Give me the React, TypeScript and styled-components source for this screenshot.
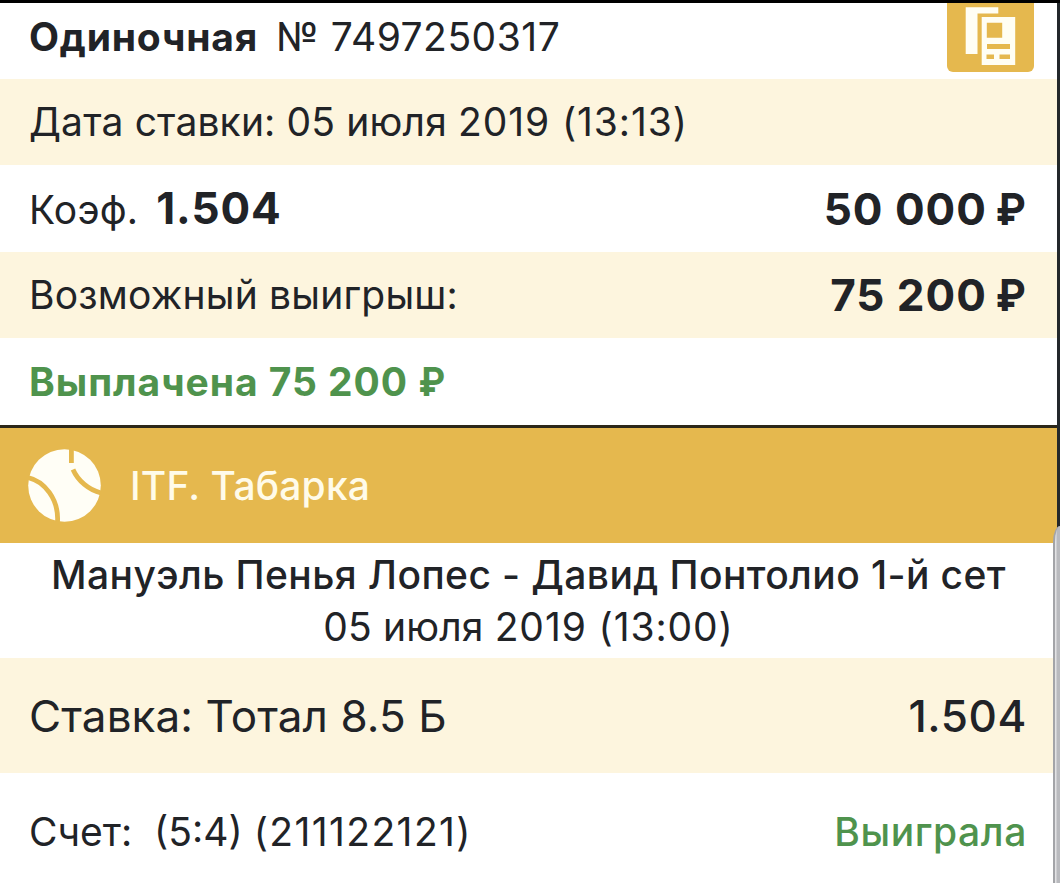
import type { ReactNode } from "react";
import styled, { createGlobalStyle } from "styled-components";

const GlobalStyle = createGlobalStyle`
  * {
    box-sizing: border-box;
  }
  body {
    margin: 0;
    background: #ffffff;
    font-family: Inter, "Liberation Sans", sans-serif;
    color: #212327;
  }
`;

interface RowProps {
  $height: number;
  $tinted?: boolean;
}

interface LabelProps {
  $size: number;
  $weight?: number;
  $spacing?: number;
  $color?: string;
}

const CopyIcon = () => (
  <svg width="87" height="69" viewBox="0 0 87 69">
    <path d="M18.7 4.3h32.6v6.2H30.5V51H18.7z" fill="#fffef4" />
    <path d="M34.7 14h33.5v48H34.7z" fill="#fffef4" />
    <path d="M39.8 19.8h15.4v15H39.8zM40 41h23v5H40zM39.5 51.5H47v4.5h-7.5zM52.5 51.5H63v4.5H52.5z" fill="#e5b84e" />
  </svg>
);

const BallIcon = () => (
  <svg width="73" height="73" viewBox="0 0 73 73">
    <circle cx="36.5" cy="36.5" r="36.3" fill="#fffef6" />
    <g fill="none" stroke="#e5b84e" strokeWidth="4.8">
      <path d="M0 28.5C16 32 31 50 29.5 73" />
      <path d="M43.4 0V14" />
      <path d="M45 20.5C50 32 61 41 73 44" />
    </g>
  </svg>
);

const Amount = ({ children }: { children: ReactNode }) => (
  <Label $size={44} $weight={700} $spacing={1}>
    {children} <Ruble $pull={5}>₽</Ruble>
  </Label>
);

const App = () => (
  <>
    <GlobalStyle />
    <Screen>
      <Ticket>
        <TitleRow $height={76}>
          <Cell>
            <Label $size={39} $weight={700} $spacing={0.8}>Одиночная</Label>
            <Label $size={39} $spacing={0.5}>№ 7497250317</Label>
          </Cell>
          <CopyButton aria-label="Копировать">
            <CopyIcon />
          </CopyButton>
        </TitleRow>
        <Row $height={86} $tinted>
          <Label $size={39} $spacing={0.15}>
            Дата ставки: 05 июля <Digits>2019 (13:13)</Digits>
          </Label>
        </Row>
        <Row $height={87}>
          <Cell>
            <Label $size={39} $spacing={0.2}>Коэф.</Label>
            <Label $size={44} $weight={700} $spacing={0.9}>1.504</Label>
          </Cell>
          <Amount>50 000</Amount>
        </Row>
        <Row $height={86} $tinted>
          <Label $size={39} $spacing={0.2}>Возможный выигрыш:</Label>
          <Amount>75 200</Amount>
        </Row>
        <Row $height={87}>
          <Label $size={39} $weight={680} $spacing={0.95} $color="#4f934d">
            Выплачена 75 200 <Ruble $pull={2}>₽</Ruble>
          </Label>
        </Row>
        <League>
          <BallIcon />
          <Label $size={39} $weight={500} $spacing={0.2} $color="#fffbe9">ITF. Табарка</Label>
        </League>
        <Match>
          <Label $size={39} $weight={500} $spacing={0.4}>Мануэль Пенья Лопес - Давид Понтолио 1-й сет</Label>
          <Label $size={39} $spacing={0.15}>
            05 июля <Digits>2019 (13:00)</Digits>
          </Label>
        </Match>
        <Row $height={115} $tinted>
          <Label $size={44} $spacing={0.1}>Ставка: Тотал 8.5 Б</Label>
          <Label $size={44} $weight={500} $spacing={0.6}>1.504</Label>
        </Row>
        <Row $height={117}>
          <Label $size={39}>
            Счет:&nbsp; (5:4) <Digits $wide>(211122121)</Digits>
          </Label>
          <Label $size={39} $weight={500} $spacing={0.6} $color="#4f934d">Выиграла</Label>
        </Row>
      </Ticket>
      <Edge>
        <Handle />
      </Edge>
    </Screen>
  </>
);

const Screen = styled.div`
  position: relative;
  width: 1060px;
  height: 883px;
  overflow: hidden;
  border-top: 3px solid #000000;
`;

const Ticket = styled.main`
  width: 1057px;
`;

const Row = styled.div<RowProps>`
  display: flex;
  align-items: center;
  justify-content: space-between;
  height: ${(props) => props.$height}px;
  padding: 0 30px 0 29px;
  background: ${(props) => (props.$tinted ? "#fdf5de" : "#ffffff")};
`;

const TitleRow = styled(Row)`
  align-items: flex-start;
`;

const Cell = styled.div`
  display: flex;
  align-items: baseline;
  gap: 18px;
  ${TitleRow} & {
    padding-top: 8px;
  }
`;

const Label = styled.span<LabelProps>`
  font-size: ${(props) => props.$size}px;
  font-weight: ${(props) => props.$weight ?? 400};
  letter-spacing: ${(props) => props.$spacing ?? 0}px;
  color: ${(props) => props.$color ?? "inherit"};
  line-height: 52px;
  white-space: pre;
`;

const Digits = styled.span<{ $wide?: boolean }>`
  letter-spacing: ${(props) => (props.$wide ? 1.4 : 0.9)}px;
`;

const Ruble = styled.span<{ $pull: number }>`
  display: inline-block;
  margin-left: -${(props) => props.$pull}px;
  transform: scaleX(0.92);
  transform-origin: right;
`;

const CopyButton = styled.button`
  width: 87px;
  height: 69px;
  margin-right: -7px;
  padding: 0;
  border: none;
  border-radius: 0 0 6px 6px;
  background: #e5b84e;
  svg {
    display: block;
  }
`;

const League = styled.div`
  display: flex;
  align-items: center;
  gap: 29px;
  height: 118px;
  padding-left: 28px;
  border-top: 3px solid #2c2718;
  background: #e5b84e;
`;

const Match = styled.div`
  display: flex;
  flex-direction: column;
  align-items: center;
  justify-content: center;
  height: 115px;
`;

const Edge = styled.div`
  position: absolute;
  top: 0;
  right: 0;
  width: 3px;
  height: 100%;
  background: #23282b;
`;

const Handle = styled.div`
  position: absolute;
  top: 523px;
  right: 0;
  bottom: 0;
  width: 7px;
  border-left: 2px solid #a3a4a8;
  border-top-left-radius: 7px 16px;
  background: linear-gradient(90deg, #e3e3e5 0 1px, #b9babe 2px);
`;

export default App;
